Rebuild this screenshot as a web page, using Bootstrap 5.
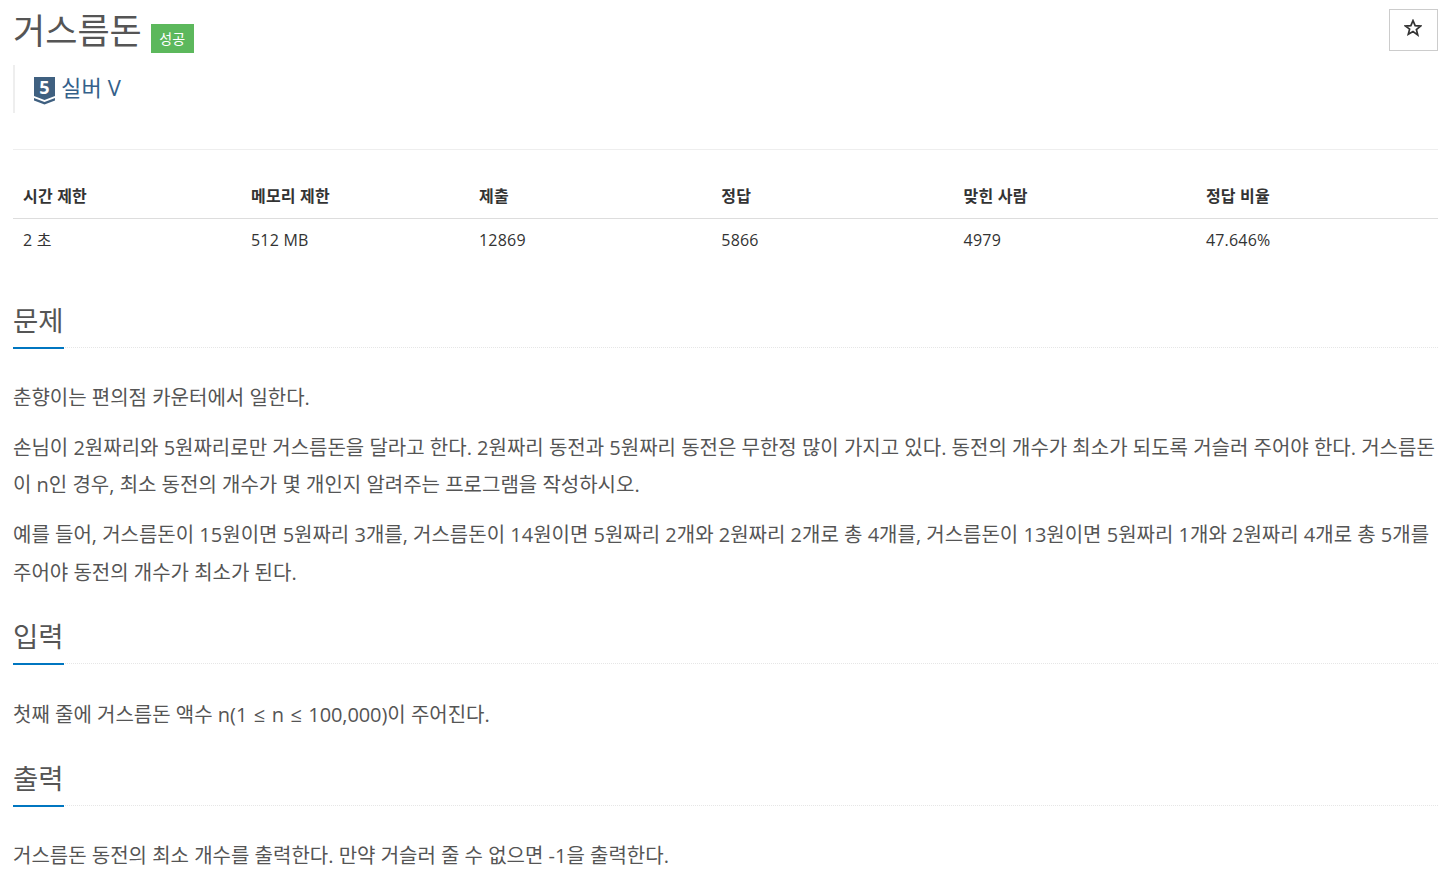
<!DOCTYPE html>
<html lang="ko"><head><meta charset="utf-8"><title>거스름돈</title>
<link href="https://cdn.jsdelivr.net/npm/bootstrap@5.3.0/dist/css/bootstrap.min.css" rel="stylesheet">
<style>
body{font-family:"Open Sans","Noto Sans CJK KR",sans-serif;font-size:16px;color:#333;background:#fff;overflow:hidden}
.pg{padding:0 15px 0 13px;height:880px;overflow:hidden}
.title-row{height:62px}
.ttl{font-size:35px;font-weight:400;color:#555;line-height:1;margin:13px 0 0}
.lbl{background:#5cb85c;color:#fff;font-size:14px;line-height:1;padding:8px 8.500px;margin:24px 0 0 9px;height:29px;display:block}
.star-btn{width:49px;height:42px;margin-top:9px;border:1px solid #ccc;border-radius:0;padding:0 2px 8px 0;background:#fff}
.tier{border-left:2px solid #eee;height:48px;margin-top:3px;padding-left:19px;color:#34608a;font-size:22px;line-height:44px;letter-spacing:.2px}
.tier svg{margin-right:6px;vertical-align:-9px;overflow:visible}
.sep{border-top:1px solid #eee;margin-top:36px}
.stat{margin:20px 0 0;table-layout:fixed;width:100%;color:#333}
.stat th,.stat td{padding:10px;border:0;font-size:16px;line-height:20px;letter-spacing:.2px}
.stat th{font-weight:700;border-bottom:1px solid #ddd;height:48px;vertical-align:bottom;padding-bottom:12px}
.stat td{padding-top:11px}
.sec-head{border-bottom:1px dotted #e6e6e6;height:61px;margin-top:27px}
.sec-head.next{margin-top:0}
.sec-head span{display:inline-block;height:62px;padding-top:14px;font-size:27.500px;line-height:40px;color:#555;border-bottom:2px solid #0076c0;font-weight:400}
.sec-body{padding-top:31px}
.sec-first{padding-top:31.400px;margin-bottom:-1.400px}
.sec-low{padding-top:32px;margin-bottom:-1px}
.body-txt{font-size:20px;line-height:37.500px;color:#555;margin:0 0 12.500px}
.mth{word-spacing:1.250px}
.mth-num{letter-spacing:-.100px}
</style></head><body>
<div class="pg">
<div class="d-flex align-items-start title-row">
<h1 class="ttl">거스름돈</h1><span class="lbl">성공</span>
<button class="btn star-btn ms-auto" aria-label="star"><svg width="18" height="18" viewBox="0 0 16 16"><path d="M8 1.400l1.900 4.500 4.800.4-3.700 3.100 1.200 4.700L8 11.100l-4.200 2.500L5 9 1.300 6.300l4.800-.4z" fill="none" stroke="#333" stroke-width="1.500" stroke-linejoin="miter"/></svg></button>
</div>
<div class="tier"><svg width="21" height="28" viewBox="0 0 21 28"><path d="M0 0h21v19l-10.500 4L0 19z" fill="#3f6080"/><path d="M0 21l10.500 4 10.500-4v2.500l-10.500 4L0 23.500z" fill="#3f6080"/><text x="10.500" y="17" text-anchor="middle" fill="#fff" font-size="18" font-weight="700" font-family="Open Sans">5</text></svg>실버 V</div>
<div class="sep"></div>
<table class="table stat">
<colgroup><col style="width:228px"><col style="width:228px"><col style="width:242.300px"><col style="width:242.300px"><col style="width:242.300px"><col></colgroup>
<thead><tr><th>시간 제한</th><th>메모리 제한</th><th>제출</th><th>정답</th><th>맞힌 사람</th><th>정답 비율</th></tr></thead>
<tbody><tr><td>2 초</td><td>512 MB</td><td>12869</td><td>5866</td><td>4979</td><td>47.646%</td></tr></tbody>
</table>
<div class="sec-head"><span>문제</span></div>
<div class="sec-body sec-first">
<p class="body-txt">춘향이는 편의점 카운터에서 일한다.</p>
<p class="body-txt">손님이 2원짜리와 5원짜리로만 거스름돈을 달라고 한다. 2원짜리 동전과 5원짜리 동전은 무한정 많이 가지고 있다. 동전의 개수가 최소가 되도록 거슬러 주어야 한다. 거스름돈이 n인 경우, 최소 동전의 개수가 몇 개인지 알려주는 프로그램을 작성하시오.</p>
<p class="body-txt">예를 들어, 거스름돈이 15원이면 5원짜리 3개를, 거스름돈이 14원이면 5원짜리 2개와 2원짜리 2개로 총 4개를, 거스름돈이 13원이면 5원짜리 1개와 2원짜리 4개로 총 5개를 주어야 동전의 개수가 최소가 된다.</p>
</div>
<div class="sec-head next"><span>입력</span></div>
<div class="sec-body sec-low"><p class="body-txt">첫째 줄에 거스름돈 액수 <span class="mth">n(1 ≤ n ≤ <span class="mth-num">100,000</span>)</span>이 주어진다.</p></div>
<div class="sec-head next"><span>출력</span></div>
<div class="sec-body"><p class="body-txt">거스름돈 동전의 최소 개수를 출력한다. 만약 거슬러 줄 수 없으면 -1을 출력한다.</p></div>
</div>
<script src="https://cdn.jsdelivr.net/npm/bootstrap@5.3.0/dist/js/bootstrap.bundle.min.js"></script>
</body></html>
